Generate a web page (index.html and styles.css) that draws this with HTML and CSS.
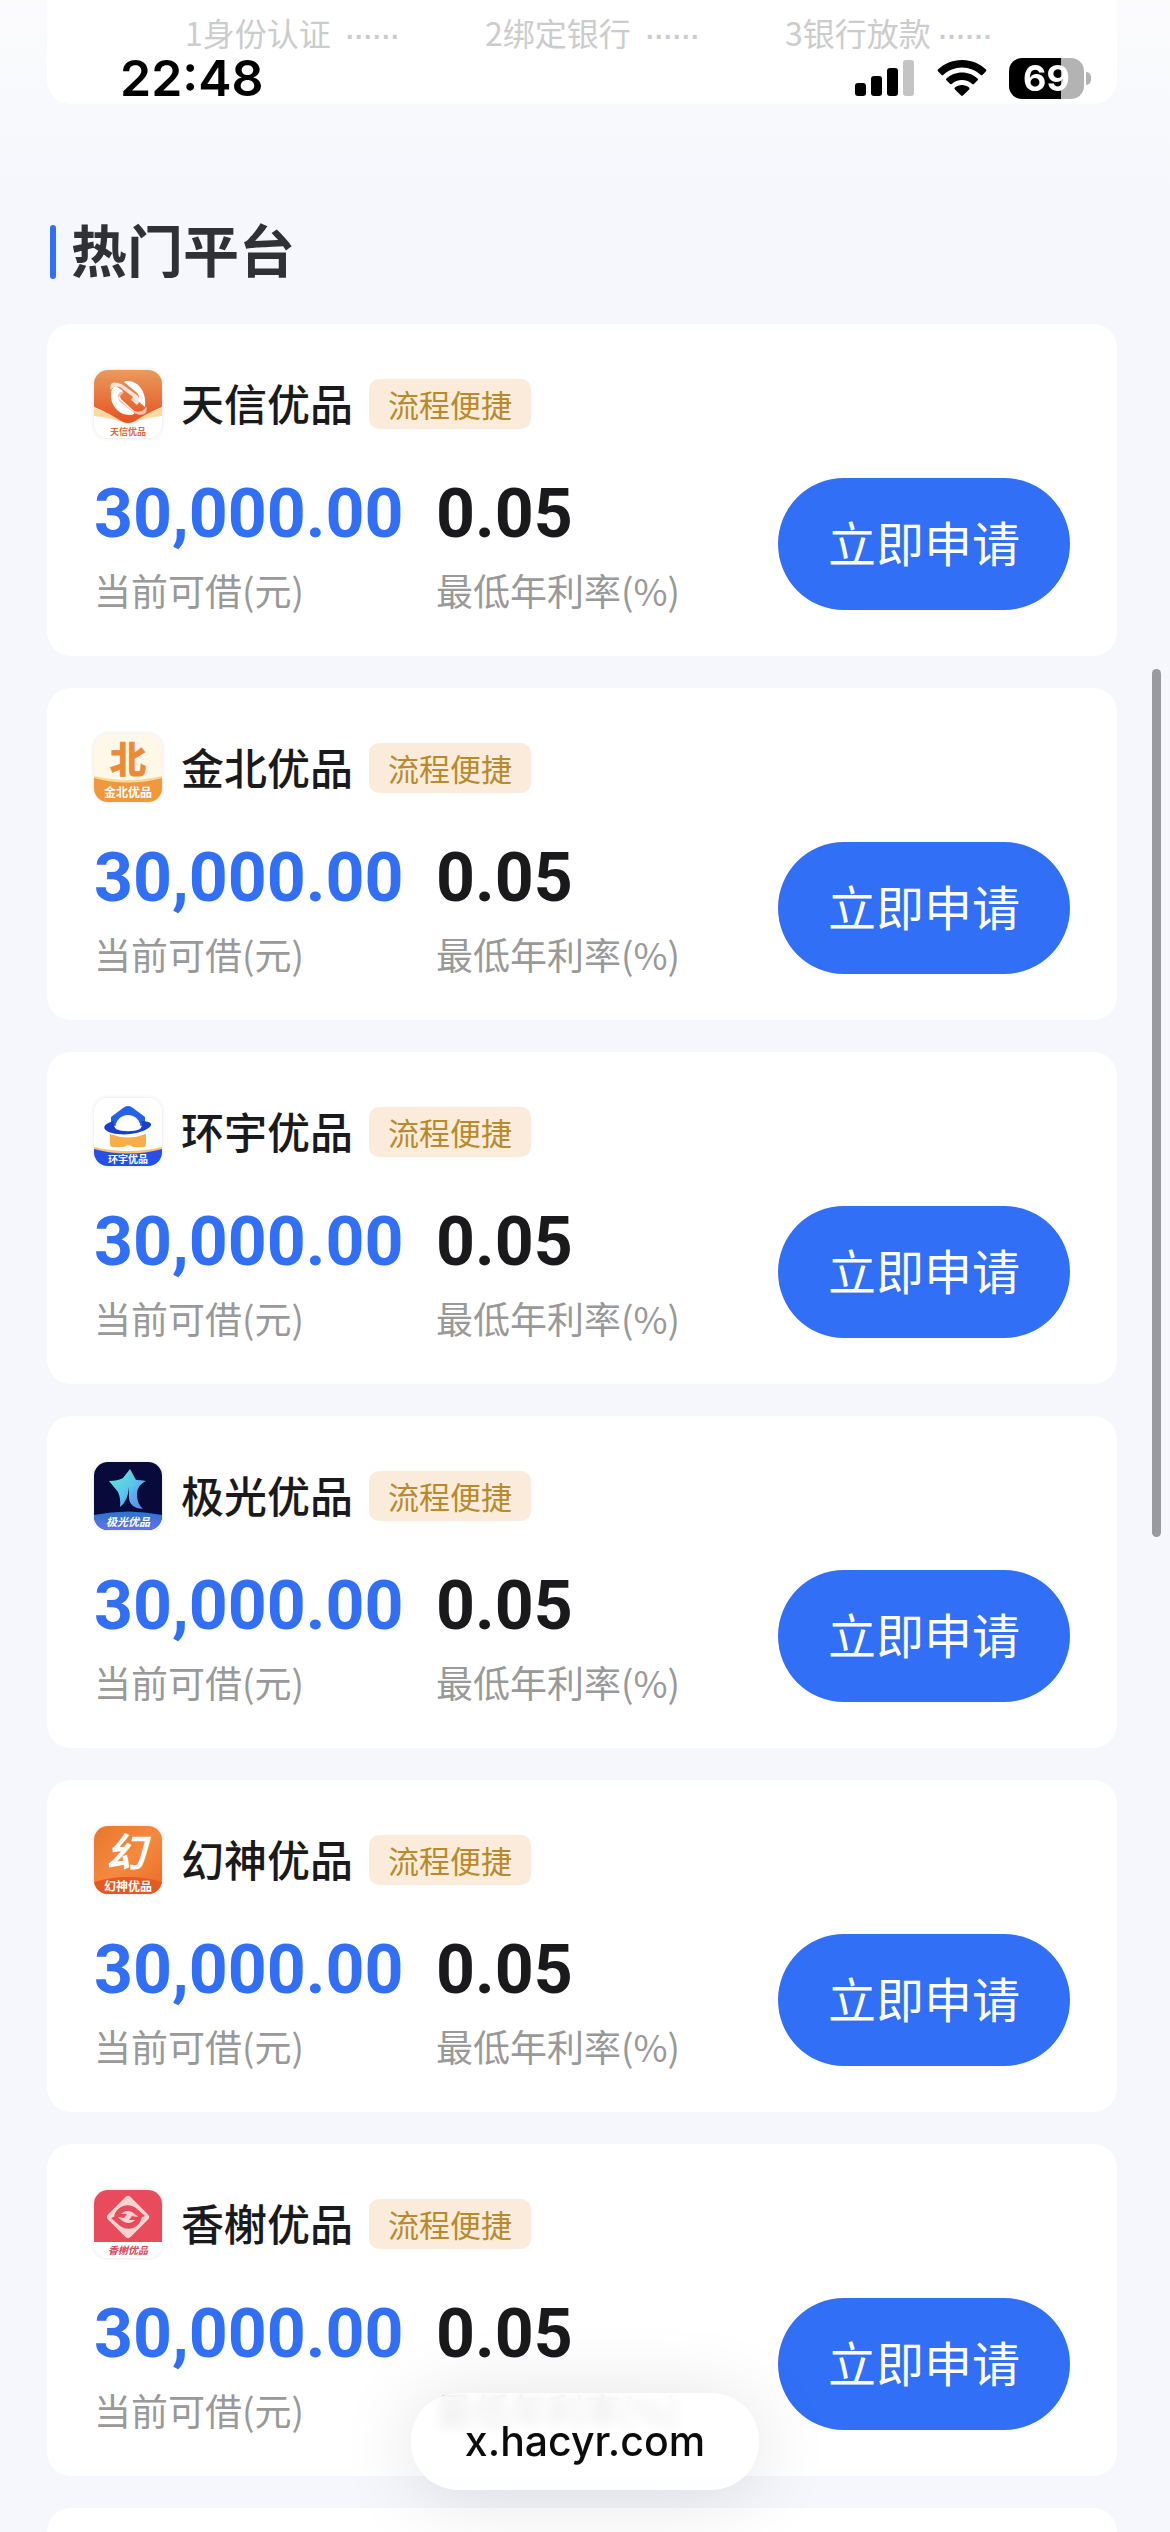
FILE: index.html
```
<!DOCTYPE html>
<html lang="zh-CN">
<head>
    <meta charset="UTF-8">
    <meta name="viewport" content="width=device-width, initial-scale=1.0">
    <title>热门平台</title>
    <link rel="stylesheet" href="styles.css">
</head>
<body>
    <!-- Phone status bar, stays over the page -->
    <header class="status-bar">
        <time class="clock">22:48</time>
        <div class="status-icons">
            <svg width="60" height="38" viewBox="0 0 60 38">
                <rect x="0" y="24" width="11" height="13" rx="3"/>
                <rect x="16" y="17" width="11" height="20" rx="3"/>
                <rect x="32" y="9" width="11" height="28" rx="3"/>
                <rect x="48" y="1" width="11" height="36" rx="3" fill="#c4c4c4"/>
            </svg>
            <svg width="50" height="38" viewBox="0 0 50 38">
                <path d="M25 1C15.500 1 7 4.700 1 10.500q-.8.900 0 1.800l3.600 3.600q.8.700 1.700 0C11.300 11.300 17.800 8.500 25 8.500s13.700 2.800 18.700 7.400q.9.700 1.700 0L49 12.300q.8-.9 0-1.800C43 4.700 34.500 1 25 1z"/>
                <path d="M25 13.500c-6 0-11.500 2.300-15.600 6q-.9.900 0 1.800l3.700 3.700q.8.700 1.700 0c2.700-2.400 6.300-3.900 10.200-3.900s7.500 1.500 10.200 3.900q.9.700 1.700 0l3.700-3.700q.9-.9 0-1.800c-4.100-3.700-9.600-6-15.600-6z"/>
                <path d="M25 26c-2.700 0-5.200 1-7.100 2.600q-.9.900 0 1.800l6.200 6.200q.9.800 1.800 0l6.200-6.200q.9-.9 0-1.800C30.200 27 27.700 26 25 26z"/>
            </svg>
            <div class="battery"><span>69</span></div>
        </div>
    </header>

    <main class="page">
        <section class="steps">
            <div class="step">1身份认证 <i>······</i></div>
            <div class="step">2绑定银行 <i>······</i></div>
            <div class="step">3银行放款<i>······</i></div>
        </section>

        <h1 class="section-title">热门平台</h1>

        <div class="platform-list">
            <article class="card">
                <div class="card-head">
                    <svg class="logo" viewBox="0 0 68 68">
                        <defs>
                            <linearGradient id="tx" x1="0" y1="0" x2="0" y2="1">
                                <stop offset="0" stop-color="#e99a5d"/>
                                <stop offset="1" stop-color="#e7521f"/>
                            </linearGradient>
                        </defs>
                        <rect width="68" height="68" fill="#fff"/>
                        <path d="M0 38L34 50 68 38v8Q50 48 34 54 18 48 0 46z" fill="#fbd9a0"/>
                        <path d="M0 0h68v37Q53 43 41 51q-7 4-14 0Q15 43 0 37z" fill="url(#tx)"/>
                        <path d="M17 24C16 34 24 45 36 45c4 0 6-2 3-5L28 30c-3-3-2-6 1-9l-7-5c-3 1-5 4-5 8z" fill="#fff"/>
                        <path d="M17 20c-3-9 5-9 12-5l14 10c4 4 3 7 0 10l-6-5 2-3L26 17c-4-1-7-1-9 3z" fill="#fde4da"/>
                        <path d="M32 11c13-1 21 12 19 26l-7-6c2-4 1-6-2-9L30 12z" fill="#fff"/>
                        <path d="M30 22l-6 6 12 11c6 4 14 4 16-3 3 8-4 11-12 7L26 32c-3-4-3-7 0-10z" fill="#f9c2ac"/>
                        <text class="logo-text" x="34" y="65" font-size="9" fill="#d96b3f">天信优品</text>
                    </svg>
                    <h2>天信优品</h2>
                    <span class="tag">流程便捷</span>
                </div>
                <div class="card-body">
                    <div class="stat amount"><strong>30,000.00</strong><span>当前可借(元)</span></div>
                    <div class="stat"><strong>0.05</strong><span>最低年利率(%)</span></div>
                    <button type="button">立即申请</button>
                </div>
            </article>

            <article class="card">
                <div class="card-head">
                    <svg class="logo" viewBox="0 0 68 68">
                        <rect width="68" height="68" fill="#fff8e9"/>
                        <text class="logo-text heavy" x="34" y="39" font-size="36" fill="#ec8a36" stroke="#ec8a36">北</text>
                        <path d="M0 42Q34 50 68 42v26H0z" fill="#fad993"/>
                        <path d="M0 44Q34 53 68 44v24H0z" fill="#f0983b"/>
                        <text class="logo-text" x="34" y="63" font-size="12" fill="#fff">金北优品</text>
                    </svg>
                    <h2>金北优品</h2>
                    <span class="tag">流程便捷</span>
                </div>
                <div class="card-body">
                    <div class="stat amount"><strong>30,000.00</strong><span>当前可借(元)</span></div>
                    <div class="stat"><strong>0.05</strong><span>最低年利率(%)</span></div>
                    <button type="button">立即申请</button>
                </div>
            </article>

            <article class="card">
                <div class="card-head">
                    <svg class="logo" viewBox="0 0 68 68">
                        <rect width="68" height="68" fill="#fff"/>
                        <path d="M34 8q3 0 5 2l12 9v9H17v-9l12-9q2-2 5-2z" fill="#2463e8"/>
                        <path d="M16 36q18 7 36 0v10q0 3-3 3H39q-4-4-9 0H19q-3 0-3-3z" fill="#f8ad4b"/>
                        <path d="M21 32c0-20 26-20 26 0z" fill="#fff"/>
                        <path d="M20 23C8 26 7 32 18 35c12 3 26 1 35-4 7-4 5-8-6-8 2 3 1 6-1 8-6 3-18 3-24 0-2-2-3-5-2-8z" fill="#193ed0"/>
                        <path d="M0 49Q34 57 68 49v19H0z" fill="#f9c376"/>
                        <path d="M0 51Q34 60 68 51v17H0z" fill="#2550e8"/>
                        <text class="logo-text" x="34" y="65" font-size="10" fill="#fff">环宇优品</text>
                    </svg>
                    <h2>环宇优品</h2>
                    <span class="tag">流程便捷</span>
                </div>
                <div class="card-body">
                    <div class="stat amount"><strong>30,000.00</strong><span>当前可借(元)</span></div>
                    <div class="stat"><strong>0.05</strong><span>最低年利率(%)</span></div>
                    <button type="button">立即申请</button>
                </div>
            </article>

            <article class="card">
                <div class="card-head">
                    <svg class="logo" viewBox="0 0 68 68">
                        <defs>
                            <linearGradient id="jg" x1="0" y1="0" x2="1" y2="1">
                                <stop offset="0" stop-color="#58f0cf"/>
                                <stop offset="0.500" stop-color="#5bc5ed"/>
                                <stop offset="1" stop-color="#557df0"/>
                            </linearGradient>
                            <linearGradient id="jg2" x1="0" y1="0" x2="0" y2="1">
                                <stop offset="0" stop-color="#2476c9"/>
                                <stop offset="1" stop-color="#6871ee"/>
                            </linearGradient>
                        </defs>
                        <rect width="68" height="68" fill="#080a3c"/>
                        <path d="M36 7l6 11q5 0 10 1-9 4-9 13 0 10 6 15-14-1-14-12V25q-1 14-9 20 1-8-2-15l-9-11q9 0 14-3z" fill="url(#jg)"/>
                        <path d="M0 53Q34 46 68 53v15H0z" fill="url(#jg2)"/>
                        <text class="logo-text slanted" x="34" y="64" font-size="11" fill="#fff">极光优品</text>
                    </svg>
                    <h2>极光优品</h2>
                    <span class="tag">流程便捷</span>
                </div>
                <div class="card-body">
                    <div class="stat amount"><strong>30,000.00</strong><span>当前可借(元)</span></div>
                    <div class="stat"><strong>0.05</strong><span>最低年利率(%)</span></div>
                    <button type="button">立即申请</button>
                </div>
            </article>

            <article class="card">
                <div class="card-head">
                    <svg class="logo" viewBox="0 0 68 68">
                        <defs>
                            <linearGradient id="hs" x1="0" y1="0" x2="1" y2="1">
                                <stop offset="0" stop-color="#e9762b"/>
                                <stop offset="0.500" stop-color="#f48a3f"/>
                                <stop offset="1" stop-color="#eb6a28"/>
                            </linearGradient>
                        </defs>
                        <rect width="68" height="68" fill="url(#hs)"/>
                        <path d="M0 56Q34 46 68 56v12H0z" fill="#e65924"/>
                        <text class="logo-text slanted" x="32" y="41" font-size="40" fill="#fff">幻</text>
                        <text class="logo-text" x="34" y="65" font-size="12" fill="#fff">幻神优品</text>
                    </svg>
                    <h2>幻神优品</h2>
                    <span class="tag">流程便捷</span>
                </div>
                <div class="card-body">
                    <div class="stat amount"><strong>30,000.00</strong><span>当前可借(元)</span></div>
                    <div class="stat"><strong>0.05</strong><span>最低年利率(%)</span></div>
                    <button type="button">立即申请</button>
                </div>
            </article>

            <article class="card">
                <div class="card-head">
                    <svg class="logo" viewBox="0 0 68 68">
                        <rect width="68" height="68" fill="#fff"/>
                        <path d="M0 0h68v52H0z" fill="#e84b5c"/>
                        <rect x="18" y="11" width="32" height="32" rx="4" fill="#fbd3cf" transform="rotate(45 34 27)"/>
                        <path d="M20 29C20 17 34 11 43 19l8 7-5 2-8-6c-5-2-8-1-11 2h6l-3 4q-6-2-10 1z" fill="#e84b5c"/>
                        <path d="M48 25c0 12-14 18-23 10l-8-7 5-2 8 6c5 2 8 1 11-2h-6l3-4q6 2 10-1z" fill="#e84b5c"/>
                        <text class="logo-text slanted" x="34" y="64" font-size="10" fill="#d9475a">香榭优品</text>
                    </svg>
                    <h2>香榭优品</h2>
                    <span class="tag">流程便捷</span>
                </div>
                <div class="card-body">
                    <div class="stat amount"><strong>30,000.00</strong><span>当前可借(元)</span></div>
                    <div class="stat"><strong>0.05</strong><span>最低年利率(%)</span></div>
                    <button type="button">立即申请</button>
                </div>
            </article>

            <article class="card"></article>
        </div>
    </main>

    <div class="scroll-thumb"></div>
    <a class="address" href="#">x.hacyr.com</a>
</body>
</html>
```
FILE: styles.css
```
* {
    box-sizing: border-box;
}

body {
    margin: 0;
    height: 100vh;
    overflow: hidden;
    background: linear-gradient(#fbfbfc, #f5f7fc 200px);
    font-family: "Noto Sans CJK SC", sans-serif;
    color: #1a1a1c;
}

h1, h2 {
    margin: 0;
}

/* Status bar */
.status-bar {
    position: fixed;
    top: 0;
    left: 0;
    right: 0;
    z-index: 2;
    display: flex;
    justify-content: space-between;
    align-items: center;
    padding: 48px 86px 0 120px;
    color: #000;
}

.clock {
    font: 600 50px/60px Inter, sans-serif;
}

.status-icons {
    display: flex;
    align-items: center;
    gap: 22px;
}

.battery {
    position: relative;
    width: 75px;
    height: 41px;
    border-radius: 13px;
    background: linear-gradient(90deg, #000 69%, #b3b3b3 69%);
    color: #fff;
    font: 700 36px/41px Inter, sans-serif;
    text-align: center;
}

.battery::after {
    content: "";
    position: absolute;
    top: 14px;
    right: -7px;
    width: 5px;
    height: 13px;
    border-radius: 0 5px 5px 0;
    background: #b3b3b3;
}

/* Page */
.page {
    padding: 0 53px 0 47px;
}

.steps {
    display: grid;
    grid-template-columns: repeat(3, 1fr);
    height: 104px;
    padding: 10px 32px 0 138px;
    border-radius: 0 0 24px 24px;
    background: #fff;
    color: #ccc;
    font-size: 32px;
    line-height: 44px;
}

.step i {
    margin-left: 8px;
    font: 700 27px "Liberation Sans", sans-serif;
}

.section-title {
    display: flex;
    align-items: center;
    gap: 15px;
    margin: 106px 0 38px;
    padding-left: 3px;
    color: #303136;
    font-size: 56px;
    font-weight: 700;
    line-height: 76px;
}

.section-title::before {
    content: "";
    width: 6px;
    height: 54px;
    margin-top: 8px;
    border-radius: 3px;
    background: #306ff6;
}

.platform-list {
    display: flex;
    flex-direction: column;
    gap: 32px;
}

.card {
    min-height: 332px;
    padding: 46px 47px;
    border-radius: 24px;
    background: #fff;
}

.card-head {
    display: flex;
    align-items: center;
    height: 68px;
}

.logo {
    width: 68px;
    height: 68px;
    margin-right: 19px;
    border-radius: 14px;
    box-shadow: 0 0 4px rgba(0, 0, 0, 0.12);
}

.logo-text {
    font-family: "Noto Sans CJK SC", sans-serif;
    font-weight: 700;
    text-anchor: middle;
}

.slanted {
    font-style: italic;
}

.heavy {
    stroke-width: 1;
}

h2 {
    padding-bottom: 4px;
    font-size: 43px;
    font-weight: 500;
    line-height: 60px;
}

.tag {
    margin-left: 16px;
    padding: 0 19px;
    border-radius: 10px;
    background: #faebda;
    color: #b78a2d;
    font-size: 31px;
    line-height: 50px;
}

.card-body {
    display: flex;
    align-items: flex-start;
    margin-top: 40px;
}

.stat {
    display: flex;
    flex-direction: column;
    gap: 20px;
    white-space: nowrap;
}

.stat.amount {
    width: 342px;
}

.stat strong {
    font: 700 68px/72px Roboto, sans-serif;
}

.amount strong {
    color: #306ff6;
}

.stat span {
    color: #999;
    font-size: 37px;
    line-height: 40px;
}

.card-body button {
    width: 292px;
    height: 132px;
    margin-left: auto;
    padding: 0 0 6px;
    border: none;
    border-radius: 66px;
    background: #306ff6;
    color: #fff;
    font-family: inherit;
    font-size: 48px;
    cursor: pointer;
}

/* Overlays */
.scroll-thumb {
    position: fixed;
    top: 669px;
    right: 9px;
    width: 9px;
    height: 868px;
    border-radius: 5px;
    background: #999a9f;
}

.address {
    position: fixed;
    bottom: 42px;
    left: 50%;
    transform: translateX(-50%);
    padding: 0 54px;
    border-radius: 48px;
    background: rgba(255, 255, 255, 0.8);
    backdrop-filter: blur(6px);
    box-shadow: 0 6px 80px rgba(0, 0, 0, 0.12);
    color: #0c0c0c;
    font: 500 41px/97px Inter, sans-serif;
    text-decoration: none;
}
```
